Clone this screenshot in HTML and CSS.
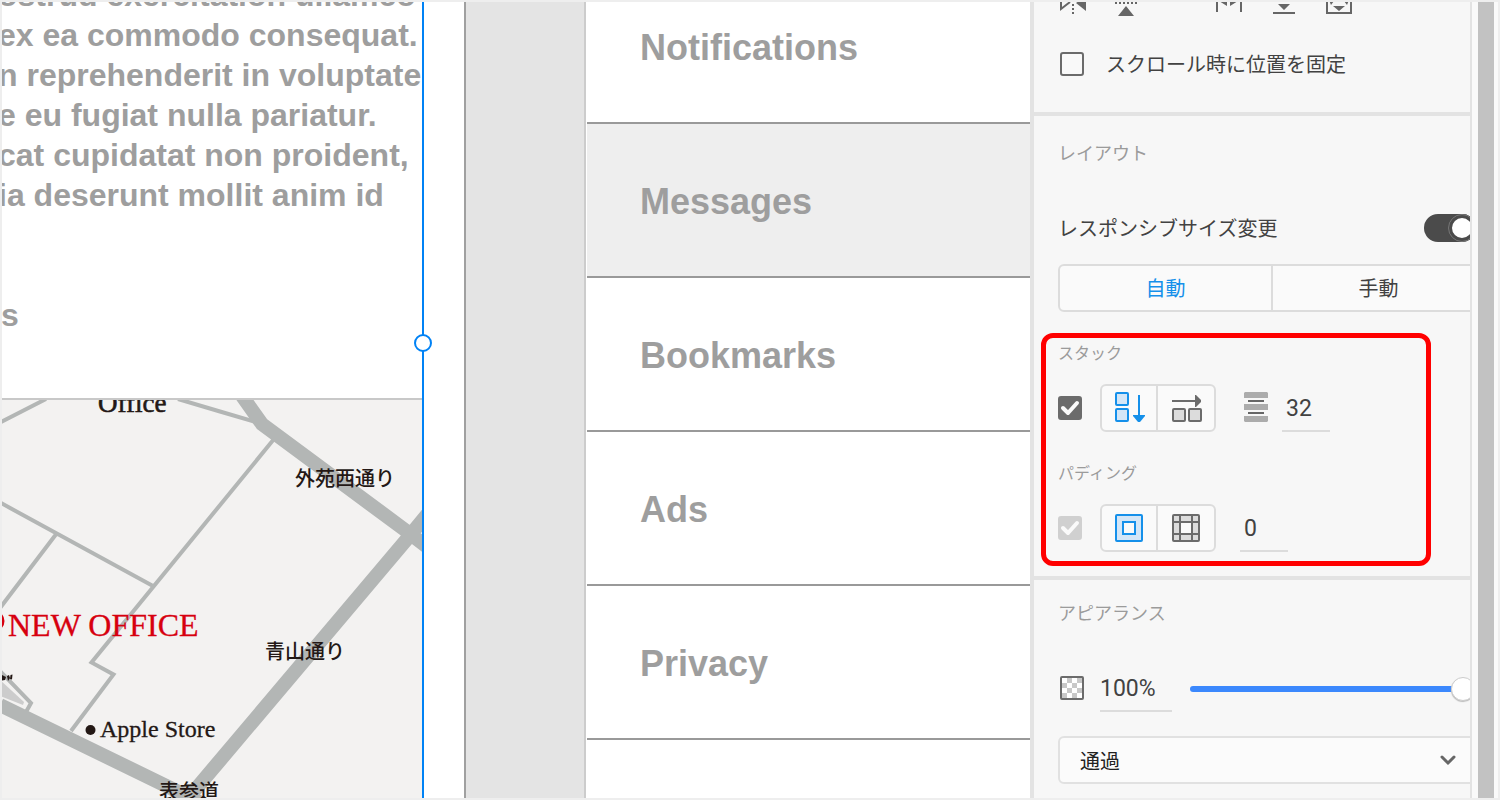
FILE: index.html
```html
<!DOCTYPE html>
<html lang="ja">
<head>
<meta charset="utf-8">
<title>Stack</title>
<link rel="stylesheet" href="styles.css">
</head>
<body>
<div class="app">
  <main class="artboard">
    <div class="frame">
      <div class="copy">
        <p>ostrud exercitation ullamco<br>ex ea commodo consequat.<br>n reprehenderit in voluptate<br>e eu fugiat nulla pariatur.<br>cat cupidatat non proident,<br>ia deserunt mollit anim id</p>
        <p>s</p>
      </div>
      <div class="map">
        <svg width="420" height="400" viewBox="2 400 420 400" role="img" aria-label="Map">
          <g fill="none" stroke="#b3b6b5" stroke-width="4">
            <path d="M0 422.500L46 399M178 399L220 411.500L256 422M0 502.500L153 586M57 533L0 608M274 439L91.500 662.500L113.500 674.500L71 731M0 671L31 703L26 712"/>
            <path stroke-width="14" d="M240 393L262 424L405 530L430 549M0 705L190 797.500L184 803L407 539L430 511"/>
          </g>
          <path fill="#ccc" d="M0 680L24 702L23 705L0 696z"/>
          <path fill="#231815" d="M0 674L6 677L5 680L0 681zM7 676l2-1l1 3l-2 3zM10.500 675l2-.5l-.5 5l-2-.5z"/>
          <circle cx="-6" cy="621" r="9" fill="none" stroke="#d7000f" stroke-width="3"/>
          <circle cx="90.500" cy="730" r="5" fill="#231815"/>
          <g class="map-en">
            <text class="map-office" x="98" y="412">Office</text>
            <text x="100" y="737">Apple Store</text>
            <text class="map-new" x="8" y="636">NEW OFFICE</text>
          </g>
          <g class="map-ja">
            <text x="295" y="486">外苑西通り</text>
            <text x="265" y="659">青山通り</text>
            <text x="159" y="799">表参道</text>
          </g>
        </svg>
      </div>
      <span class="handle"></span>
    </div>
  </main>

  <nav class="menu">
    <ul>
      <li><a href="#notifications">Notifications</a></li>
      <li class="active"><a href="#messages">Messages</a></li>
      <li><a href="#bookmarks">Bookmarks</a></li>
      <li><a href="#ads">Ads</a></li>
      <li><a href="#privacy">Privacy</a></li>
      <li><a href="#more" aria-label="More"></a></li>
    </ul>
  </nav>

  <aside class="panel">
    <section class="section position">
      <svg class="tools" width="320" height="16" viewBox="1058 2 320 16" fill="#666">
        <path fill="none" stroke="#666" stroke-width="2" d="M1061 -6V9L1070 2"/>
        <path d="M1076 3L1086 -4V11z"/>
        <path d="M1072 4h2v2h-2zM1072 8h2v2h-2zM1072 12h2v2h-2z"/>
        <path d="M1115 2h2v2h-2zM1119 2h2v2h-2zM1123 2h2v2h-2zM1127 2h2v2h-2zM1131 2h2v2h-2zM1135 2h2v2h-2zM1126 6L1134 16H1118z"/>
        <path d="M1216 0h2v12h-2zM1240 0h2v12h-2zM1219 1L1227 0V6zM1238 1L1230 0V6z"/>
        <path d="M1273 12h22v2h-22zM1278 4h12L1284 10z"/>
        <path fill="none" stroke="#666" stroke-width="2" d="M1327 -6V13H1351V-6"/>
        <path d="M1333 6h12L1339 11zM1329 0L1334 1L1331 5zM1349 0L1344 1L1347 5z"/>
      </svg>
      <label class="fix"><input type="checkbox" class="box"><span>スクロール時に位置を固定</span></label>
    </section>

    <section class="section layout">
      <h2>レイアウト</h2>
      <label class="responsive"><span>レスポンシブサイズ変更</span><input type="checkbox" class="toggle" checked></label>
      <div class="segments">
        <button type="button" class="on">自動</button>
        <button type="button">手動</button>
      </div>

      <h3>スタック</h3>
      <div class="row">
        <span class="check"><input type="checkbox" class="box" checked aria-label="スタック"><svg width="24" height="24" viewBox="0 0 24 24"><path d="M5 12L10 17L19 7"/></svg></span>
        <div class="group">
          <button type="button" aria-label="縦方向"><svg width="32" height="32" viewBox="0 0 32 32" fill="#d4e6f7" stroke="#1590ea" stroke-width="2"><rect x="3" y="1" width="12" height="12" rx="1"/><rect x="3" y="17" width="12" height="12" rx="1"/><path d="M26 3V24"/><path fill="#1590ea" stroke="none" d="M20 23H32V24L27 30H25L20 24z"/></svg></button>
          <button type="button" aria-label="横方向"><svg width="32" height="32" viewBox="0 0 32 32" fill="#dcdcdc" stroke="#6b6b6b" stroke-width="2"><rect x="3" y="17" width="12" height="12" rx="1"/><rect x="19" y="17" width="12" height="12" rx="1"/><path d="M2 9H26"/><path fill="#6b6b6b" stroke="none" d="M25 3H26L31 8V10L26 15H25z"/></svg></button>
        </div>
        <svg class="spacing" width="24" height="32" viewBox="0 1 24 32"><path fill="#acacac" d="M0 7V2L1 1H23L24 2V7zM0 13H24V19H0zM0 25H24V30L23 31H1L0 30z"/><path fill="#666" d="M6 9h16v2H6zM6 21h16v2H6z" transform="translate(-2 0)"/></svg>
        <input class="number" type="text" value="32" aria-label="間隔">
      </div>

      <h3>パディング</h3>
      <div class="row">
        <span class="check"><input type="checkbox" class="box" checked disabled aria-label="パディング"><svg width="24" height="24" viewBox="0 0 24 24"><path d="M5 12L10 17L19 7"/></svg></span>
        <div class="group">
          <button type="button" aria-label="すべて同じ"><svg width="32" height="32" viewBox="0 0 32 32" fill="#d4e6f7" stroke="#1590ea" stroke-width="2"><rect x="3" y="3" width="26" height="26" rx="1"/><rect x="10" y="10" width="12" height="12" fill="#fafafa"/></svg></button>
          <button type="button" aria-label="個別"><svg width="32" height="32" viewBox="0 0 32 32" fill="#dcdcdc" stroke="#6b6b6b" stroke-width="2"><rect x="3" y="3" width="26" height="26" rx="1"/><rect x="10" y="10" width="12" height="12" fill="#fafafa"/><path d="M10 3V29M22 3V29M3 10H29M3 22H29"/></svg></button>
        </div>
        <input class="number" type="text" value="0" aria-label="パディングの値">
      </div>
      <div class="highlight"></div>
    </section>

    <section class="section appearance">
      <h2>アピアランス</h2>
      <div class="row">
        <svg class="swatch" width="24" height="24" viewBox="0 0 24 24"><rect x="1" y="1" width="22" height="22" rx="1" fill="#fff" stroke="#6b6b6b" stroke-width="2"/><path fill="#c8c8c8" d="M7 2h5v5H7zM17 2h5v5h-5zM2 7h5v5H2zM12 7h5v5h-5zM7 12h5v5H7zM17 12h5v5h-5zM2 17h5v5H2zM12 17h5v5h-5z"/></svg>
        <input class="number opacity" type="text" value="100%" aria-label="不透明度">
        <input class="slider" type="range" min="0" max="100" value="100" aria-label="不透明度スライダー">
      </div>
      <div class="blend">
        <select aria-label="描画モード"><option>通過</option></select>
        <svg width="20" height="12" viewBox="0 0 20 12"><path d="M4 3L10 9L16 3"/></svg>
      </div>
    </section>
  </aside>
  <div class="rail"><div class="thumb"></div></div>
</div>
</body>
</html>
```
FILE: styles.css
```css
*, *::before { box-sizing: border-box; }
body {
  margin: 0;
  font-family: "Noto Sans CJK JP", "Noto Sans", sans-serif;
  font-size: 20px;
  color: #424242;
}
button, input, select { font: inherit; color: inherit; margin: 0; }
h2, h3, p, ul { margin: 0; padding: 0; }
h2, h3 { font-weight: 400; }

.app {
  height: 100vh;
  display: grid;
  grid-template-columns: 464px minmax(0, 1fr) 442px 26px;
  border: 2px solid #eee;
  background: #e4e4e4;
  overflow: hidden;
}
.app > * { min-height: 0; overflow: hidden; }

/* Artboard */
.artboard { background: #fff; border-right: 2px solid #a0a0a0; }
.frame {
  position: relative;
  width: 422px;
  height: 100%;
  display: flex;
  flex-direction: column;
  border-right: 2px solid #0082f5;
}
.copy {
  margin: -27px 0 0 -4px;
  font: bold 32px/40px "Liberation Sans", Arial, sans-serif;
  color: #9e9e9e;
  white-space: nowrap;
}
.copy p + p { margin-top: 80px; padding-left: 3px; }
.map {
  flex: 1;
  min-height: 0;
  margin-top: 63px;
  border-top: 2px solid #c8c8c8;
  background: #f3f2f1;
  overflow: hidden;
}
.map svg { display: block; }
.map-en { font-family: "Liberation Serif", serif; font-size: 24px; fill: #231815; stroke: #231815; stroke-width: 0.3; }
.map-en .map-office { font-size: 27px; stroke-width: 0.6; }
.map-en .map-new { font-size: 32px; fill: #d7000f; stroke: #d7000f; }
.map-ja { font-size: 20px; font-weight: 500; fill: #231815; }
.handle {
  position: absolute;
  right: -10px;
  top: 332px;
  width: 18px;
  height: 18px;
  border: 2px solid #0082f5;
  border-radius: 50%;
  background: #fff;
}

/* Menu artboard */
.menu { margin-left: 118px; border-left: 2px solid #ccc; background: #fff; }
.menu ul { list-style: none; margin: -32px 0 0 1px; }
.menu li { border-bottom: 2px solid #999; }
.menu .active { background: #eee; }
.menu a {
  display: flex;
  align-items: center;
  height: 152px;
  padding: 4px 0 0 53px;
  font: bold 36px/40px "Liberation Sans", Arial, sans-serif;
  color: #9e9e9e;
  text-decoration: none;
}

/* Property panel */
.panel { border-left: 4px solid #e3e3e3; border-right: 2px solid #e3e3e3; background: #f7f7f7; }
.section { position: relative; width: 476px; padding: 0 24px; border-bottom: 4px solid #e3e3e3; }
.section h2, .section h3 { line-height: 24px; color: #9b9b9b; }
.section h2 { font-size: 18px; }
.section h3 { font-size: 16px; margin: 28px 0 20px; }
.position { padding-bottom: 36px; }
.tools { display: block; margin-bottom: 34px; }
.fix { display: flex; align-items: center; gap: 22px; height: 24px; padding-left: 2px; line-height: 24px; }
.layout { padding-top: 24px; padding-bottom: 24px; }
.responsive {
  display: flex;
  align-items: center;
  justify-content: space-between;
  height: 28px;
  line-height: 28px;
  margin: 50px 10px 22px 0;
}
.box {
  appearance: none;
  display: block;
  width: 24px;
  height: 24px;
  border: 2px solid #6b6b6b;
  border-radius: 3px;
  background: #f9f9f9;
}
.box:checked { background: #6b6b6b; }
.box:disabled { background: #d0d0d0; border-color: #d0d0d0; }
.check { display: grid; margin-right: 18px; }
.check > * { grid-area: 1 / 1; }
.check svg { position: relative; pointer-events: none; fill: none; stroke: #fafafa; stroke-width: 4; stroke-linecap: round; stroke-linejoin: round; }
.toggle {
  appearance: none;
  display: flex;
  justify-content: flex-end;
  width: 52px;
  height: 28px;
  border-radius: 14px;
  background: #4b4b4b;
}
.toggle::before {
  content: "";
  width: 28px;
  height: 28px;
  border: 4px solid #4b4b4b;
  border-radius: 50%;
  background: #fff;
  outline: 1px solid #777;
  outline-offset: -1px;
}
.segments, .group {
  display: flex;
  height: 48px;
  border: 2px solid #dcdcdc;
  border-radius: 6px;
  background: #fafafa;
  overflow: hidden;
}
.segments button, .group button {
  flex: 1;
  display: flex;
  align-items: center;
  justify-content: center;
  padding: 0;
  border: 0;
  background: transparent;
}
.segments button { padding-bottom: 2px; }
.segments button + button, .group button + button { border-left: 2px solid #dcdcdc; }
.segments .on { color: #1590ea; }
.group { width: 116px; }
.group button:first-child { flex: 0 0 54px; }
.row { display: flex; align-items: center; height: 48px; }
.spacing { margin: 0 -10px 0 28px; }
.number {
  width: 48px;
  height: 48px;
  margin-left: 24px;
  padding: 2px 4px 0;
  border: 0;
  border-bottom: 2px solid #dcdcdc;
  background: transparent;
  font: 23px/24px Roboto, sans-serif;
}
.opacity { width: 72px; margin-left: 16px; padding: 2px 0 0; }
.highlight {
  position: absolute;
  left: 7px;
  top: 217px;
  width: 390px;
  height: 233px;
  border: 5px solid #f00;
  border-radius: 12px;
  pointer-events: none;
}
.appearance { padding-top: 20px; padding-bottom: 24px; }
.appearance .row { margin: 40px 0 24px; }
.swatch { margin-left: 2px; }
.slider {
  appearance: none;
  width: 285px;
  height: 24px;
  margin: 2px 0 0 18px;
  background: transparent;
}
.slider::-webkit-slider-runnable-track { height: 6px; border-radius: 3px; background: #3b88fd; }
.slider::-webkit-slider-thumb {
  appearance: none;
  width: 24px;
  height: 24px;
  margin-top: -9px;
  border: 1px solid #ccc;
  border-radius: 50%;
  background: #fff;
  box-shadow: 0 1px 1px #bbb;
}
.blend { display: grid; align-items: center; }
.blend > * { grid-area: 1 / 1; }
.blend select {
  appearance: none;
  width: 100%;
  height: 48px;
  padding: 0 20px;
  border: 2px solid #e1e1e1;
  border-radius: 6px;
  background: #fbfbfb;
  color: #222;
}
.blend svg {
  justify-self: end;
  margin-right: 28px;
  fill: none;
  stroke: #666;
  stroke-width: 3;
  stroke-linecap: round;
  pointer-events: none;
}

.rail { padding-left: 6px; background: #fafafa; }
.thumb { width: 16px; height: 100%; background: #c2c2c2; }
```
